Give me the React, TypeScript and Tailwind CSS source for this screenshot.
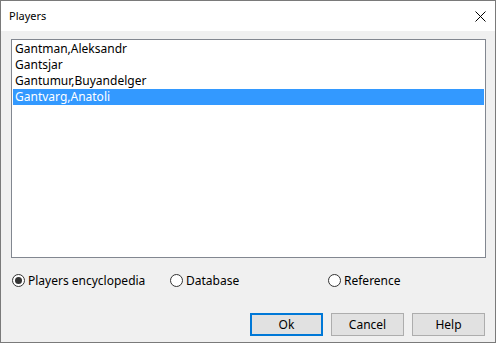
import React from "react";

const font = { fontFamily: '"Segoe UI", "Noto Sans", "Open Sans", sans-serif' };

function Radio({ checked, label }: { checked?: boolean; label: string }) {
  return (
    <div className="flex items-center gap-[3px]">
      <div className="w-[13px] h-[13px] rounded-full border border-[#333333] bg-white flex items-center justify-center">
        {checked && <div className="w-[7px] h-[7px] rounded-full bg-[#333333]" />}
      </div>
      <span className="text-[12px] leading-[14px] text-black">{label}</span>
    </div>
  );
}

function Btn({ label, def }: { label: string; def?: boolean }) {
  return (
    <div
      className={
        "w-[73px] h-[23px] bg-[#e1e1e1] flex items-center justify-center text-[12px] text-black " +
        (def ? "border-2 border-[#0078d7]" : "border border-[#adadad]")
      }
    >
      {label}
    </div>
  );
}

export default function App() {
  const items = ["Gantman,Aleksandr", "Gantsjar", "Gantumur,Buyandelger", "Gantvarg,Anatoli"];
  return (
    <div
      className="w-[496px] h-[343px] border border-[#7a7a7a] bg-[#f0f0f0] flex flex-col overflow-hidden"
      style={font}
    >
      <div className="h-[30px] bg-white flex items-center justify-between pl-[8px] pr-[9px] shrink-0">
        <span className="text-[11px] text-black">Players</span>
        <svg width="11" height="11" viewBox="0 0 11 11">
          <path d="M0.5 0.5L10.5 10.5M10.5 0.5L0.5 10.5" stroke="#000" strokeWidth="1" />
        </svg>
      </div>
      <div className="flex-1 flex flex-col pl-[10px] pt-[8px]">
        <div className="w-[475px] h-[219px] border border-[#828790] bg-white p-[1px] flex flex-col">
          {items.map((t, i) => (
            <div
              key={t}
              className={
                "h-[16px] leading-[16px] pl-[2px] text-[12px] " +
                (i === 3 ? "bg-[#3399ff] text-white" : "text-black")
              }
            >
              {t}
            </div>
          ))}
        </div>
        <div className="flex items-center h-[15px] mt-[15px] pl-[1px]">
          <div className="w-[158px]">
            <Radio checked label="Players encyclopedia" />
          </div>
          <div className="w-[158px]">
            <Radio label="Database" />
          </div>
          <Radio label="Reference" />
        </div>
        <div className="flex justify-end gap-[8px] mt-[25px] pr-[10px]">
          <Btn label="Ok" def />
          <Btn label="Cancel" />
          <Btn label="Help" />
        </div>
      </div>
    </div>
  );
}
